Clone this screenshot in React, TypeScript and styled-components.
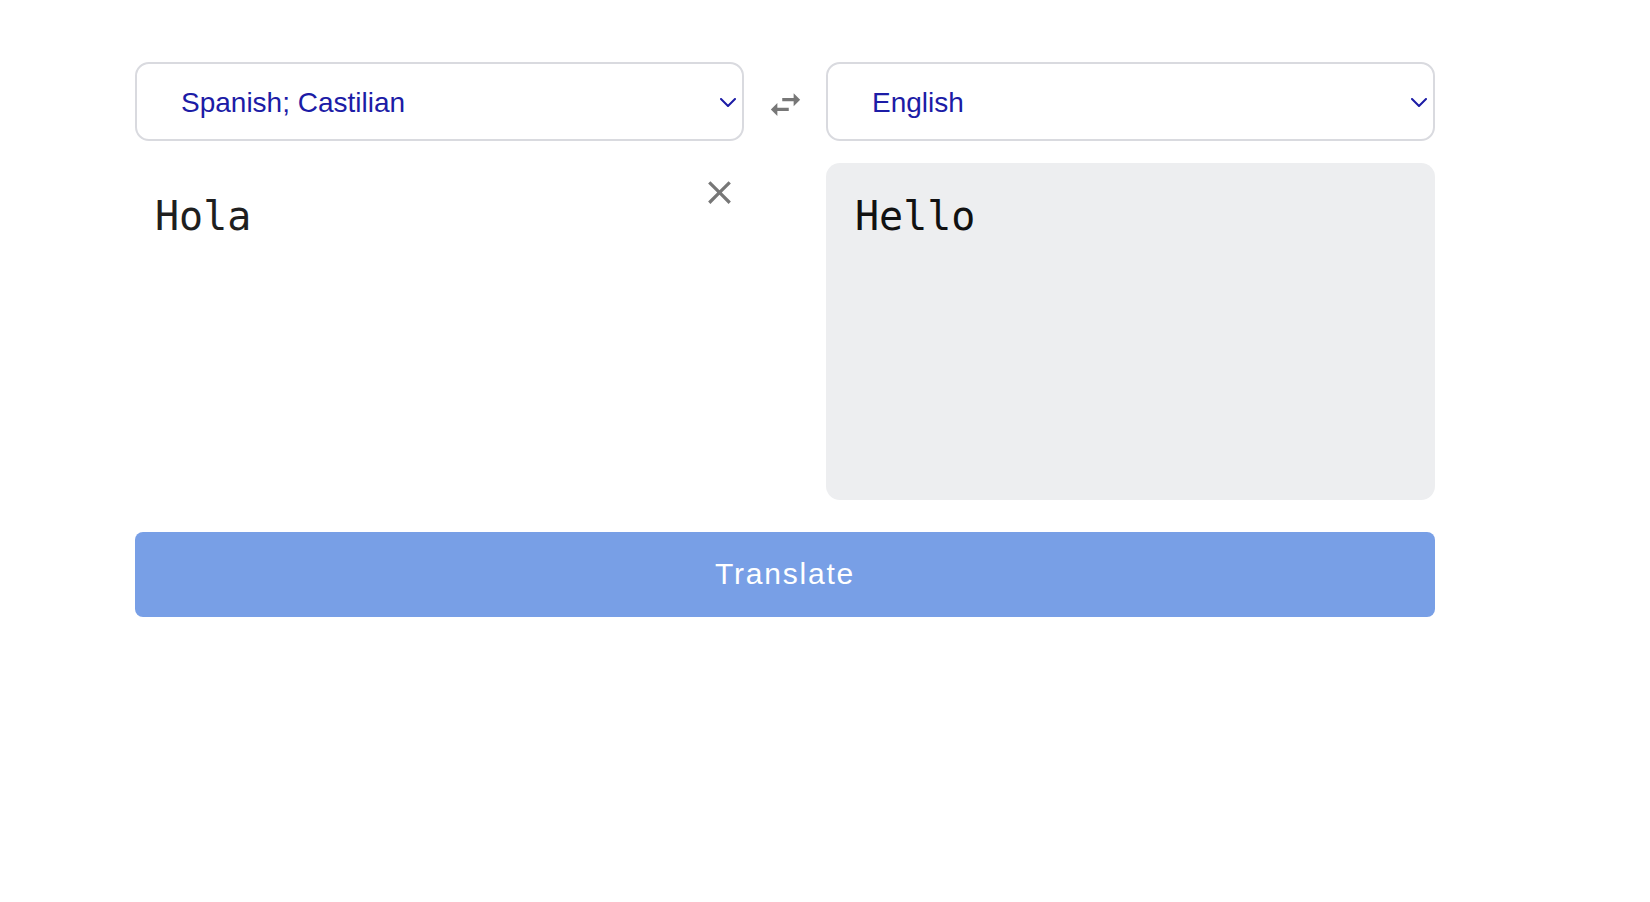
import React, { useState } from "react";
import styled, { createGlobalStyle } from "styled-components";

const Global = createGlobalStyle`
  html, body { margin: 0; padding: 0; background: #ffffff; }
  body { font-family: "Liberation Sans", Arial, sans-serif; }
  * { box-sizing: border-box; }
`;

const Page = styled.main`
  padding: 62px 0 0 135px;
`;

const Grid = styled.div`
  width: 1300px;
  display: grid;
  grid-template-columns: 609px 82px 609px;
  grid-template-rows: 79px 337px;
  row-gap: 22px;
`;

const SelectWrap = styled.div`
  position: relative;
  height: 79px;
`;

const LangSelect = styled.select`
  appearance: none;
  -webkit-appearance: none;
  width: 100%;
  height: 100%;
  border: 2px solid #d9dadf;
  border-radius: 14px;
  background: #ffffff;
  padding: 2px 40px 0 44px;
  font-family: "Liberation Sans", Arial, sans-serif;
  font-size: 28px;
  color: #1c1ca6;
  outline: none;
  cursor: pointer;
`;

const Chevron = styled.svg`
  position: absolute;
  right: 8px;
  top: 50%;
  margin-top: -4px;
  width: 16px;
  height: 9px;
  pointer-events: none;
`;

const SwapCell = styled.div`
  display: flex;
  align-items: center;
  justify-content: center;
  padding-top: 5px;
`;

const IconButton = styled.button`
  border: none;
  background: transparent;
  padding: 0;
  width: 39px;
  height: 39px;
  display: flex;
  align-items: center;
  justify-content: center;
  cursor: pointer;
  color: #777777;
  svg { width: 39px; height: 39px; fill: currentColor; display: block; }
`;

const InputPanel = styled.div`
  position: relative;
  grid-column: 1;
`;

const TextInput = styled.textarea`
  width: 100%;
  height: 100%;
  border: none;
  resize: none;
  outline: none;
  padding: 30px 60px 0 20px;
  font-family: "DejaVu Sans Mono", monospace;
  font-size: 40px;
  line-height: normal;
  color: #1f1f1f;
  background: transparent;
`;

const ClearButton = styled(IconButton)`
  position: absolute;
  right: 5px;
  top: 10px;
`;

const Output = styled.div`
  grid-column: 3;
  background: #edeef0;
  border-radius: 14px;
  padding: 30px 29px;
  font-family: "DejaVu Sans Mono", monospace;
  font-size: 40px;
  line-height: normal;
  color: #111111;
`;

const TranslateButton = styled.button`
  display: block;
  width: 1300px;
  height: 85px;
  margin-top: 32px;
  padding-top: 0;
  border: none;
  border-radius: 8px;
  background: #789fe6;
  color: #ffffff;
  font-family: "Liberation Sans", Arial, sans-serif;
  font-size: 30px;
  letter-spacing: 1.8px;
  cursor: pointer;
`;

const ChevronIcon = () => (
  <Chevron viewBox="0 0 16 9" fill="none">
    <path d="M1 1l7 7 7-7" stroke="#1c1ca6" strokeWidth="2" strokeLinecap="round" strokeLinejoin="round" />
  </Chevron>
);

const languages = ["Spanish; Castilian", "English", "French", "German"];

export default function App() {
  const [src, setSrc] = useState("Spanish; Castilian");
  const [dst, setDst] = useState("English");
  const [text, setText] = useState("Hola");

  return (
    <Page>
      <Global />
      <Grid>
        <SelectWrap>
          <LangSelect value={src} onChange={(e) => setSrc(e.target.value)}>
            {languages.map((l) => (
              <option key={l} value={l}>{l}</option>
            ))}
          </LangSelect>
          <ChevronIcon />
        </SelectWrap>
        <SwapCell>
          <IconButton aria-label="swap" onClick={() => { setSrc(dst); setDst(src); }}>
            <svg viewBox="0 0 24 24">
              <path d="M6.99 11L3 15l3.99 4v-3H14v-2H6.99v-3zM21 9l-3.99-4v3H10v2h7.01v3L21 9z" />
            </svg>
          </IconButton>
        </SwapCell>
        <SelectWrap>
          <LangSelect value={dst} onChange={(e) => setDst(e.target.value)}>
            {languages.map((l) => (
              <option key={l} value={l}>{l}</option>
            ))}
          </LangSelect>
          <ChevronIcon />
        </SelectWrap>
        <InputPanel>
          <TextInput value={text} onChange={(e) => setText(e.target.value)} />
          <ClearButton aria-label="clear" onClick={() => setText("")}>
            <svg viewBox="0 0 24 24">
              <path d="M19 6.41L17.59 5 12 10.59 6.41 5 5 6.41 10.59 12 5 17.59 6.41 19 12 13.41 17.59 19 19 17.59 13.41 12z" />
            </svg>
          </ClearButton>
        </InputPanel>
        <Output>Hello</Output>
      </Grid>
      <TranslateButton>Translate</TranslateButton>
    </Page>
  );
}
